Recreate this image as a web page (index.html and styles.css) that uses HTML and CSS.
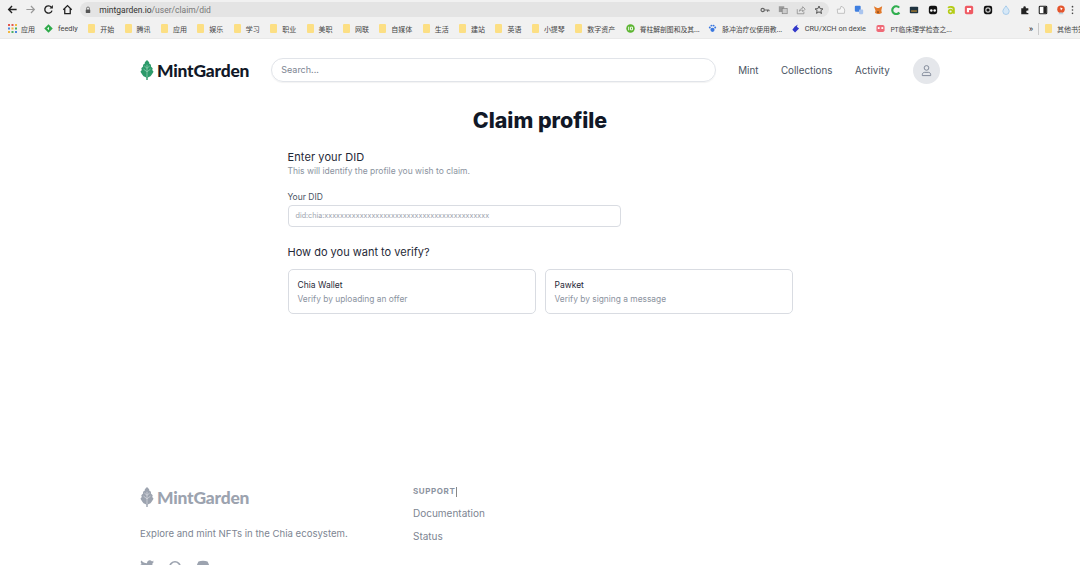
FILE: index.html
```html
<!DOCTYPE html>
<html lang="en">
<head>
    <meta charset="UTF-8">
    <meta name="viewport" content="width=device-width, initial-scale=1.0">
    <title>Claim profile - MintGarden</title>
    <link rel="stylesheet" href="styles.css">
</head>
<body>
    <div class="toolbar">
        <svg class="nav-icon" viewBox="0 0 12 12"><path d="M10.5 6H2M5.5 2.2 1.8 6l3.7 3.8" fill="none" stroke="#222" stroke-width="1.5"/></svg>
        <svg class="nav-icon" viewBox="0 0 12 12"><path d="M1.5 6H10M6.5 2.2 10.2 6l-3.7 3.8" fill="none" stroke="#999" stroke-width="1.3"/></svg>
        <svg class="nav-icon" viewBox="0 0 12 12"><path d="M9.8 7.2A4 4 0 1 1 9.2 3.6" fill="none" stroke="#222" stroke-width="1.5"/><path d="M10.8 1.2v3.6H7.2z" fill="#222"/></svg>
        <svg class="nav-icon" viewBox="0 0 12 12"><path d="M1.4 6.2 6 1.8l4.6 4.4M3 5.2v5.2h6V5.2" fill="none" stroke="#222" stroke-width="1.4"/></svg>
        <div class="omnibox">
            <svg class="lock" viewBox="0 0 8 10"><path d="M2 4.5V3a2 2 0 0 1 4 0v1.5" fill="none" stroke="#555"/><rect x="1" y="4.3" width="6" height="4.7" rx=".6" fill="#555"/></svg>
            <span class="url">mintgarden.io<span class="url-path">/user/claim/did</span></span>
            <div class="omni-actions">
                <svg class="omni-icon" viewBox="0 0 12 12"><circle cx="3.2" cy="6" r="2" fill="none" stroke="#666" stroke-width="1.4"/><path d="M5 6h6M9 6v2M10.8 6v1.6" fill="none" stroke="#666" stroke-width="1.3"/></svg>
                <svg class="omni-icon" viewBox="0 0 12 12"><rect x="1" y="1.5" width="6.5" height="7" fill="#999"/><rect x="5" y="4" width="6" height="6.5" fill="#ccc" stroke="#777" stroke-width=".7"/></svg>
                <svg class="omni-icon" viewBox="0 0 12 12"><path d="M1.500 5v5.500h8V8M4 7.500C4.500 5 6.300 3.800 8 3.800V2l3 3-3 3V6C6.300 6 5 6.400 4 7.500z" fill="none" stroke="#888" stroke-width=".9"/></svg>
                <svg class="omni-icon" viewBox="0 0 12 12"><path d="m6 1.300 1.400 3.100 3.300.3-2.500 2.200.8 3.300L6 8.200l-3 1.800.8-3.300L1.300 4.700l3.300-.3z" fill="none" stroke="#444" stroke-width="1.100"/></svg>
            </div>
        </div>
        <div class="extensions">
            <svg class="ext" viewBox="0 0 12 12"><path d="M2 10 1.500 5 5 5 6 1.500 9 3 10.500 6 10 10z" fill="#f6f6f6" stroke="#aaa" stroke-width=".8"/></svg>
            <svg class="ext" viewBox="0 0 12 12"><rect x="1" y="1" width="7" height="7" rx="1" fill="#3f7fe0"/><rect x="6" y="5.500" width="5" height="5.500" rx="1" fill="#a9c4ee"/></svg>
            <svg class="ext" viewBox="0 0 12 12"><path d="M1 1.500 5 3.500h2l4-2-1 5 .6 3-3 1.200H5.400l-3-1.200.6-3z" fill="#e2792a"/><path d="M5 7.500h2v2H5z" fill="#8a4f22"/></svg>
            <svg class="ext" viewBox="0 0 12 12"><path d="M9.800 3.200A4.700 4.700 0 1 0 10 9" fill="none" stroke="#2fae4e" stroke-width="2.600"/></svg>
            <svg class="ext" viewBox="0 0 12 12"><rect x="1" y="2" width="10" height="8" rx="1" fill="#1f3340"/><path d="M2.500 6.500h7v1.500h-7z" fill="#b8862d"/></svg>
            <svg class="ext" viewBox="0 0 12 12"><rect x="1" y="1" width="10" height="10" rx="2.500" fill="#111"/><circle cx="4" cy="6.500" r="1.500" fill="#fff"/><circle cx="8" cy="6.500" r="1.500" fill="#fff"/></svg>
            <svg class="ext" viewBox="0 0 12 12"><path d="M2.500 3.500C4 1.800 9.500 1.800 9.500 5v5.500" fill="none" stroke="#b5cc18" stroke-width="2.200"/><circle cx="5.500" cy="7.800" r="2.300" fill="none" stroke="#b5cc18" stroke-width="2"/></svg>
            <svg class="ext" viewBox="0 0 12 12"><rect x="1" y="1" width="10" height="10" rx="2" fill="#ef5a63"/><path d="M3.500 3.500h5V6H6v2.800H3.500z" fill="#fff"/></svg>
            <svg class="ext" viewBox="0 0 12 12"><rect x="1" y="1" width="10" height="10" rx="2.500" fill="#111"/><circle cx="6" cy="6" r="2.600" fill="none" stroke="#ccc" stroke-width="1.400"/></svg>
            <svg class="ext" viewBox="0 0 12 12"><path d="M6 1C8 4 9.800 5.600 9.800 7.600a3.800 3.800 0 0 1-7.600 0C2.200 5.600 4 4 6 1z" fill="#d6e8f7" stroke="#8dbde6" stroke-width=".8"/></svg>
            <svg class="ext" viewBox="0 0 12 12"><path d="M1.500 4H4V3a1.500 1.500 0 0 1 3 0v1h3v2.500H9a1.500 1.500 0 0 0 0 3h1V11H1.500z" fill="#222"/></svg>
            <svg class="ext" viewBox="0 0 12 12"><rect x="1.500" y="1.500" width="9" height="9" rx="1" fill="#fff" stroke="#222" stroke-width="1.300"/><rect x="6.500" y="2" width="3.500" height="8" fill="#222"/></svg>
            <svg class="ext" viewBox="0 0 12 12"><circle cx="6" cy="5" r="4.500" fill="#e4542c"/><path d="M3 11c.5-2.500 5.500-2.500 6 0z" fill="#bcd0dc"/><path d="M5 3l3 1-2 2.500z" fill="#fff"/></svg>
            <svg class="menu-dots" viewBox="0 0 3 12"><circle cx="1.500" cy="2" r="1" fill="#444"/><circle cx="1.500" cy="6" r="1" fill="#444"/><circle cx="1.500" cy="10" r="1" fill="#444"/></svg>
        </div>
    </div>

    <div class="bookmarks">
        <span class="mark mark-apps">
            <svg class="fav" viewBox="0 0 9 9">
                <rect width="2" height="2" fill="#e4574c"/><rect x="3.500" width="2" height="2" fill="#e4574c"/><rect x="7" width="2" height="2" fill="#f3b73f"/>
                <rect y="3.500" width="2" height="2" fill="#4a86e0"/><rect x="3.500" y="3.500" width="2" height="2" fill="#f3b73f"/><rect x="7" y="3.500" width="2" height="2" fill="#4bb063"/>
                <rect y="7" width="2" height="2" fill="#f3b73f"/><rect x="3.500" y="7" width="2" height="2" fill="#4bb063"/><rect x="7" y="7" width="2" height="2" fill="#4a86e0"/>
            </svg>应用</span>
        <span class="mark"><svg class="fav" viewBox="0 0 10 10"><path d="M5 .3 9.700 5 5 9.700.3 5z" fill="#2eaa4a"/><path d="M3.500 5 5.500 3v4z" fill="#fff"/></svg><span class="latin">feedly</span></span>
        <span class="mark"><span class="folder"></span>开始</span>
        <span class="mark"><span class="folder"></span>腾讯</span>
        <span class="mark"><span class="folder"></span>应用</span>
        <span class="mark"><span class="folder"></span>娱乐</span>
        <span class="mark"><span class="folder"></span>学习</span>
        <span class="mark"><span class="folder"></span>职业</span>
        <span class="mark"><span class="folder"></span>美职</span>
        <span class="mark"><span class="folder"></span>网联</span>
        <span class="mark"><span class="folder"></span>自媒体</span>
        <span class="mark"><span class="folder"></span>生活</span>
        <span class="mark"><span class="folder"></span>建站</span>
        <span class="mark"><span class="folder"></span>英语</span>
        <span class="mark"><span class="folder"></span>小提琴</span>
        <span class="mark"><span class="folder"></span>数字资产</span>
        <span class="mark mark-long"><svg class="fav" viewBox="0 0 10 10"><circle cx="5" cy="5" r="4.700" fill="#5cb531"/><path d="M3 3v4M5 3.500h2.200v3H5z" fill="none" stroke="#fff"/></svg>脊柱解剖图和及其...</span>
        <span class="mark mark-long"><svg class="fav" viewBox="0 0 10 10"><circle cx="5" cy="6.500" r="2.300" fill="#3b78e0"/><circle cx="2" cy="4" r="1.100" fill="#3b78e0"/><circle cx="8" cy="4" r="1.100" fill="#3b78e0"/><circle cx="3.800" cy="1.800" r="1.100" fill="#3b78e0"/><circle cx="6.200" cy="1.800" r="1.100" fill="#3b78e0"/></svg>脉冲治疗仪使用教...</span>
        <span class="mark"><svg class="fav" viewBox="0 0 10 10"><path d="M7.500.5 6.500 3 9 5 4.500 9.500 1.500 6.500 4 3z" fill="#3238c9"/></svg><span class="latin">CRU/XCH on dexie</span></span>
        <span class="mark mark-long"><svg class="fav" viewBox="0 0 10 10"><rect x=".5" y="1" width="9" height="8" rx="2" fill="#ef6a77"/><rect x="2" y="3.500" width="2" height="2" fill="#fff"/><rect x="6" y="3.500" width="2" height="2" fill="#fff"/></svg>PT临床理学检查之...</span>
        <span class="more">»</span>
        <span class="bar-sep"></span>
        <span class="mark last"><span class="folder"></span>其他书签</span>
    </div>

    <header class="site-header">
        <a class="logo">
            <svg class="leaf" viewBox="0 0 16 24"><path d="M8 .5 10.500 3v1.500L12.500 6v2l2 2-.5 2 1.500 2-2 3-1.500 2-3.200 1.500v3H7.200v-3L4 19l-1.500-2-2-3L2 12l-.5-2 2-2V6l2-1.500V3z" fill="#2c9a6a"/><path d="M8 6v14M8 10 5 7.500M8 10l3-2.500M8 14 4 11M8 14l4-3" fill="none" stroke="#a9dcc3" stroke-width=".7"/></svg>
            <span>MintGarden</span>
        </a>
        <div class="search">Search...</div>
        <nav class="nav">
            <a>Mint</a>
            <a>Collections</a>
            <a>Activity</a>
        </nav>
        <div class="avatar">
            <svg viewBox="0 0 14 14"><circle cx="7" cy="4.200" r="2.500" fill="none" stroke="#7b8494"/><path d="M2.500 12.500v-1c0-1.500 1-2.500 2.500-2.500h4c1.500 0 2.500 1 2.500 2.500v1z" fill="none" stroke="#7b8494"/></svg>
        </div>
    </header>

    <main class="claim">
        <h1>Claim profile</h1>
        <section class="claim-form">
            <h2>Enter your DID</h2>
            <p class="hint">This will identify the profile you wish to claim.</p>
            <label>Your DID</label>
            <div class="did-input">did:chia:xxxxxxxxxxxxxxxxxxxxxxxxxxxxxxxxxxxxxxxxxx</div>
            <h2 class="verify-title">How do you want to verify?</h2>
            <div class="options">
                <div class="option">
                    <div class="option-name">Chia Wallet</div>
                    <div class="option-desc">Verify by uploading an offer</div>
                </div>
                <div class="option">
                    <div class="option-name">Pawket</div>
                    <div class="option-desc">Verify by signing a message</div>
                </div>
            </div>
        </section>
    </main>

    <footer class="site-footer">
        <div class="footer-brand">
            <a class="logo logo-muted">
                <svg class="leaf" viewBox="0 0 16 24"><path d="M8 .5 10.500 3v1.500L12.500 6v2l2 2-.5 2 1.500 2-2 3-1.500 2-3.200 1.500v3H7.200v-3L4 19l-1.500-2-2-3L2 12l-.5-2 2-2V6l2-1.500V3z" fill="#9ca3af"/><path d="M8 6v14M8 10 5 7.500M8 10l3-2.500M8 14 4 11M8 14l4-3" fill="none" stroke="#e3e5e9" stroke-width=".7"/></svg>
                <span>MintGarden</span>
            </a>
            <p class="tagline">Explore and mint NFTs in the Chia ecosystem.</p>
            <div class="social">
                <svg viewBox="0 0 14 12"><path d="M14 1.500c-.5.300-1 .4-1.600.5.600-.4 1-.9 1.200-1.500-.5.300-1.100.5-1.800.7A2.800 2.800 0 0 0 7 3.300C4.700 3.200 2.600 2.100 1.200.5.400 1.800.800 3.400 2 4.200c-.5 0-.9-.1-1.300-.3 0 1.300 1 2.500 2.300 2.800-.4.100-.9.100-1.300 0 .4 1.100 1.400 1.900 2.700 2A5.700 5.700 0 0 1 0 9.900 8 8 0 0 0 12.500 3.200c.6-.4 1.100-1 1.500-1.700z" fill="#9ca3af"/></svg>
                <svg viewBox="0 0 14 12"><circle cx="7" cy="7" r="5.200" fill="none" stroke="#9ca3af" stroke-width="1.600"/></svg>
                <svg viewBox="0 0 14 12"><path d="M2.500 1.500C5 .5 9 .5 11.500 1.500 13 4 13.800 7 14 10c-1 1-2.500 1.500-3.500 2L9.500 10.500h-5L3.500 12C2.500 11.500 1 11 0 10 .2 7 1 4 2.500 1.500z" fill="#9ca3af"/></svg>
            </div>
        </div>
        <div class="footer-links">
            <div class="footer-heading">SUPPORT<span class="caret"></span></div>
            <a>Documentation</a>
            <a>Status</a>
        </div>
    </footer>
</body>
</html>
```

FILE: styles.css
```css
body {
    margin: 0;
    height: 565px;
    overflow: hidden;
    background-color: white;
    font-family: Inter, "Open Sans", sans-serif;
    color: #111827;
}

/* browser chrome */
.toolbar {
    display: flex;
    align-items: center;
    height: 19px;
    padding-left: 7px;
    background-color: #f1f1f1;
}
.nav-icon {
    width: 11px;
    height: 11px;
    margin-right: 7.200px;
}
.omnibox {
    display: flex;
    align-items: center;
    width: 749px;
    height: 15px;
    padding-left: 5px;
    box-sizing: border-box;
    background-color: #e4e4e4;
    border-radius: 8px;
}
.lock {
    width: 6px;
    height: 8px;
    margin-right: 8.500px;
}
.url {
    font-family: Roboto, sans-serif;
    font-size: 8.500px;
    color: #333;
}
.url-path {
    color: #777;
}
.omni-actions {
    display: flex;
    gap: 8px;
    margin-left: auto;
    margin-right: 5px;
}
.omni-icon {
    width: 10px;
    height: 10px;
}
.extensions {
    display: flex;
    align-items: center;
    gap: 8.400px;
    margin-left: 7px;
}
.ext {
    width: 10px;
    height: 10px;
}
.menu-dots {
    width: 3px;
    height: 10px;
    margin-left: -4px;
}
.bookmarks {
    display: flex;
    align-items: center;
    height: 19px;
    padding-left: 8px;
    background-color: #f1f1f1;
    font-family: "Noto Sans CJK SC", sans-serif;
    font-size: 7px;
    color: #444;
    white-space: nowrap;
    overflow: hidden;
    border-bottom: 1px solid #e9e9e9;
}
.mark {
    display: flex;
    align-items: center;
    gap: 5px;
    margin-right: 10.400px;
}
.mark-apps {
    gap: 4px;
    margin-right: 9px;
}
.mark-long {
    font-size: 6.800px;
    margin-right: 8.500px;
}
.mark.last {
    margin-right: -5px;
}
.latin {
    font-family: Roboto, sans-serif;
    font-size: 7.400px;
}
.folder {
    width: 7px;
    height: 9px;
    background-color: #fcdf84;
    border-radius: 1px;
}
.fav {
    width: 9px;
    height: 9px;
}
.more {
    margin-left: auto;
    font-size: 9px;
    color: #222;
}
.bar-sep {
    width: 1px;
    height: 12px;
    margin: 0 6px 0 5px;
    background-color: #c9c9c9;
}

/* site */
.site-header {
    display: flex;
    align-items: center;
    width: 800px;
    height: 62px;
    margin: 0 auto;
}
.logo {
    display: flex;
    align-items: center;
    gap: 3px;
    font-family: Lato, sans-serif;
    font-size: 17.400px;
    font-weight: 900;
    letter-spacing: -0.2px;
    color: #111827;
}
.leaf {
    width: 14px;
    height: 22px;
}
.search {
    flex: 0 0 445px;
    box-sizing: border-box;
    height: 24px;
    margin-left: 22px;
    padding-left: 9px;
    line-height: 22px;
    font-size: 9px;
    color: #7d8592;
    border: 1px solid #e1e4e9;
    border-radius: 12px;
    box-shadow: 0 1px 1px rgba(0,0,0,0.05);
}
.nav {
    display: flex;
    gap: 22.500px;
    margin-left: 22px;
    font-size: 9.800px;
    color: #4b5563;
}
.avatar {
    display: flex;
    align-items: center;
    justify-content: center;
    width: 27px;
    height: 27px;
    margin-left: auto;
    background-color: #e5e7eb;
    border-radius: 50%;
}
.avatar svg {
    width: 13px;
    height: 13px;
}
h1 {
    margin: 5px 0 0;
    text-align: center;
    font-size: 21.400px;
    line-height: 28px;
    font-weight: 800;
    color: #111827;
}
.claim-form {
    width: 505px;
    margin: 0 auto;
    padding-top: 15px;
}
h2 {
    margin: 0;
    font-size: 11px;
    line-height: 16px;
    font-weight: 400;
    letter-spacing: 0.1px;
    color: #1f2937;
}
.hint {
    margin: 0;
    font-size: 8.500px;
    line-height: 13px;
    color: #8b93a0;
}
label {
    display: block;
    margin-top: 13px;
    font-size: 8.500px;
    line-height: 12px;
    color: #4b5563;
}
.did-input {
    box-sizing: border-box;
    width: 333px;
    height: 22px;
    margin-top: 2px;
    padding-left: 7px;
    line-height: 20px;
    font-size: 7.200px;
    color: #9aa1ac;
    border: 1px solid #d9dce2;
    border-radius: 4px;
}
.verify-title {
    margin-top: 17px;
    letter-spacing: 0;
}
.options {
    display: flex;
    gap: 9px;
    margin-top: 9px;
}
.option {
    flex: 1;
    box-sizing: border-box;
    height: 45px;
    padding: 9px;
    border: 1px solid #d9dce2;
    border-radius: 5px;
}
.option-name {
    font-size: 8.500px;
    line-height: 13px;
    color: #1f2937;
}
.option-desc {
    margin-top: 1px;
    font-size: 8.400px;
    line-height: 13px;
    color: #8b93a0;
}
.site-footer {
    display: flex;
    width: 800px;
    margin: 172px auto 0;
}
.footer-brand {
    width: 273px;
}
.logo-muted {
    color: #9ca3af;
}
.tagline {
    margin: 19px 0 0;
    font-size: 9.600px;
    line-height: 14px;
    color: #7d8592;
}
.social {
    display: flex;
    gap: 14px;
    margin-top: 19px;
}
.social svg {
    width: 14px;
    height: 12px;
}
.footer-links {
    display: flex;
    flex-direction: column;
    font-size: 10px;
    color: #7d8592;
}
.footer-heading {
    font-size: 8px;
    font-weight: 700;
    letter-spacing: 0.6px;
    line-height: 11px;
    color: #8b93a0;
}
.caret {
    display: inline-block;
    width: 1px;
    height: 10px;
    margin-left: 1px;
    vertical-align: middle;
    background-color: #888;
}
.footer-links a {
    margin-top: 9px;
    line-height: 14px;
}
```
